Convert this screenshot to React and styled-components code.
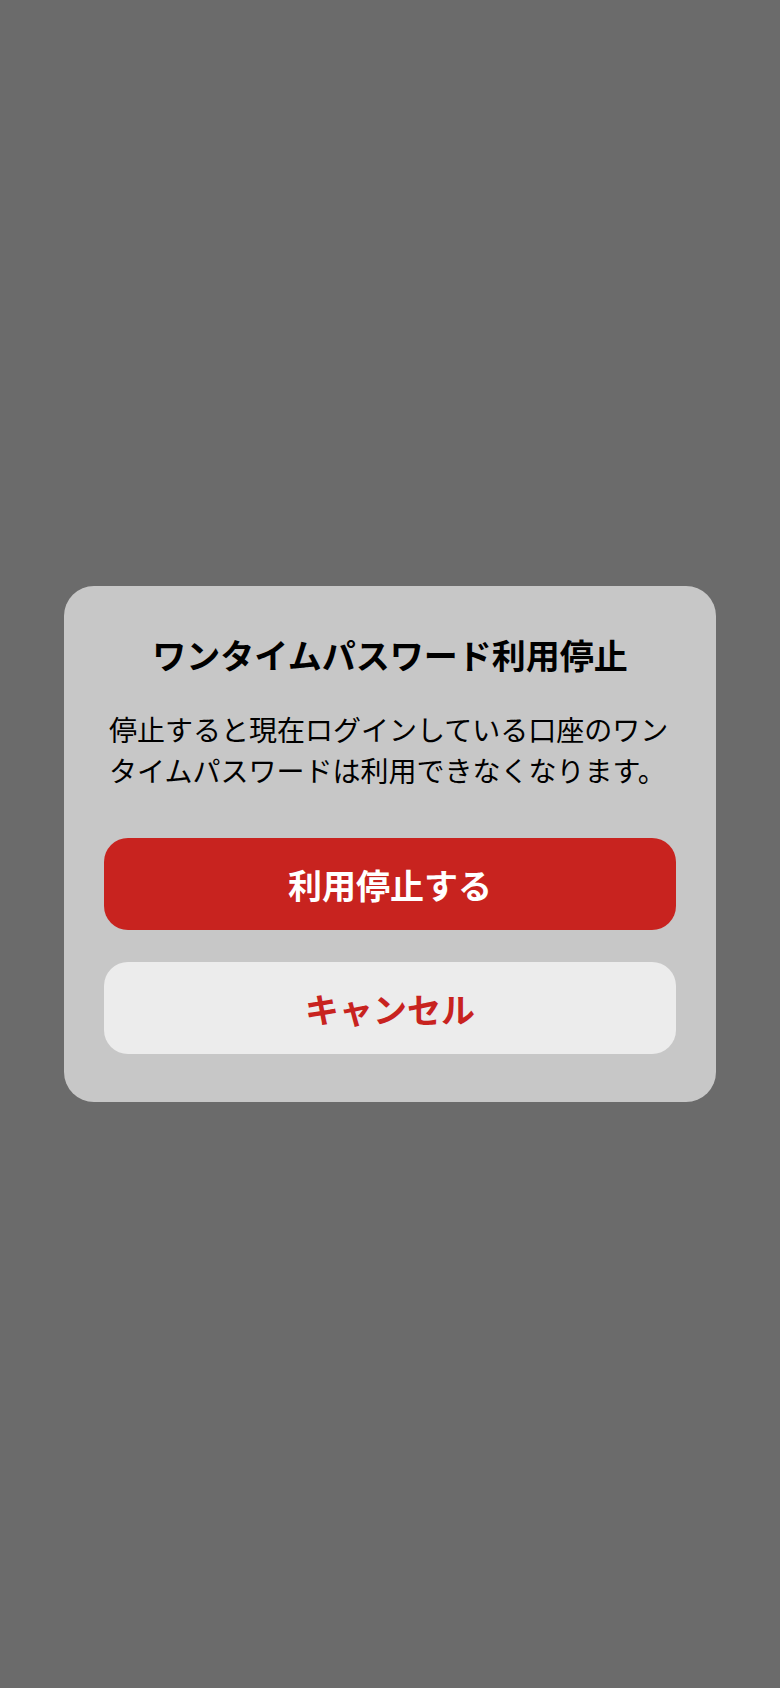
import React from 'react';
import styled, { createGlobalStyle } from 'styled-components';

const GlobalStyle = createGlobalStyle`
  html, body, #root {
    margin: 0;
    padding: 0;
    height: 100%;
  }
  body {
    font-family: 'Noto Sans CJK JP', 'Noto Sans', sans-serif;
    background-color: #6b6b6b;
  }
`;

const Overlay = styled.div`
  min-height: 100vh;
  display: flex;
  align-items: center;
  justify-content: center;
  background-color: #6b6b6b;
`;

const Dialog = styled.section`
  width: 652px;
  box-sizing: border-box;
  padding: 47px 40px 48px;
  display: flex;
  flex-flow: column nowrap;
  background-color: #c7c7c7;
  border-radius: 30px;
`;

const Title = styled.h2`
  margin: 0;
  font-size: 34px;
  line-height: 44px;
  font-weight: 700;
  color: #000;
  text-align: center;
`;

const Message = styled.p`
  margin: 32px 0 47px;
  padding: 0 5px;
  font-size: 28px;
  line-height: 41px;
  font-weight: 400;
  color: #000;
  text-align: left;
`;

const Actions = styled.div`
  display: flex;
  flex-flow: column nowrap;
  gap: 32px;
`;

const Button = styled.button`
  height: 92px;
  border: 0;
  border-radius: 24px;
  cursor: pointer;
  font-family: inherit;
  font-size: 34px;
  font-weight: 700;
  background-color: ${(p) => (p.$primary ? '#c8231f' : '#ececec')};
  color: ${(p) => (p.$primary ? '#fff' : '#c8231f')};
`;

const App = () => {
  return (
    <Overlay>
      <GlobalStyle />
      <Dialog role="dialog">
        <Title>ワンタイムパスワード利用停止</Title>
        <Message>
          停止すると現在ログインしている口座のワンタイムパスワードは利用できなくなります。
        </Message>
        <Actions>
          <Button $primary onClick={() => {}}>利用停止する</Button>
          <Button onClick={() => {}}>キャンセル</Button>
        </Actions>
      </Dialog>
    </Overlay>
  );
};

export default App;
